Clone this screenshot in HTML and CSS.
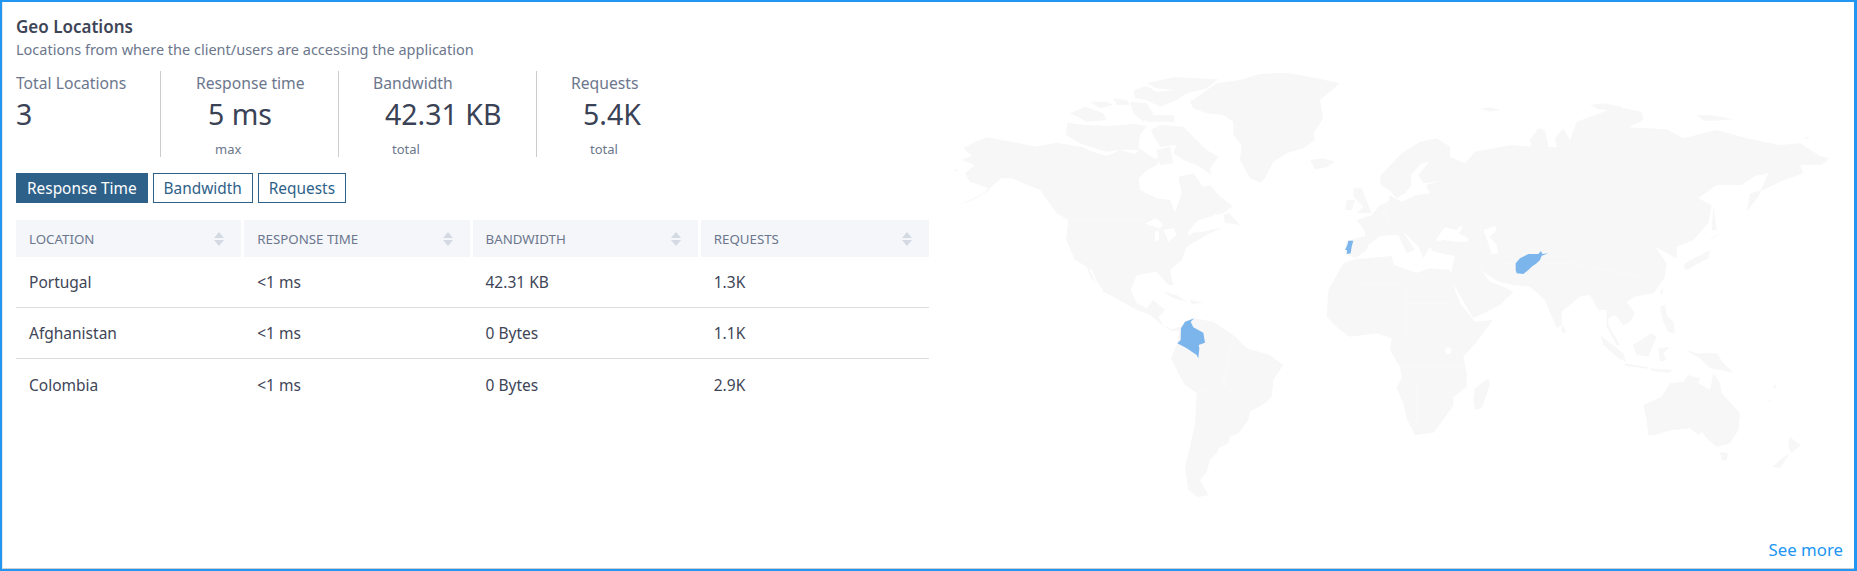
FILE: index.html
```html
<!DOCTYPE html>
<html lang="en">
<head>
    <meta charset="UTF-8">
    <title>Geo Locations</title>
    <link rel="stylesheet" href="styles.css">
</head>
<body>
    <div class="frame">
        <div class="card">
            <div class="details">
                <h2 class="title">Geo Locations</h2>
                <p class="subtitle">Locations from where the client/users are accessing the application</p>

                <div class="stats">
                    <div class="stat stat-first">
                        <div class="stat-label">Total Locations</div>
                        <div class="stat-value">3</div>
                    </div>
                    <div class="stat stat-second">
                        <div class="stat-label">Response time</div>
                        <div class="stat-value">5 ms</div>
                        <div class="stat-sub">max</div>
                    </div>
                    <div class="stat stat-third">
                        <div class="stat-label">Bandwidth</div>
                        <div class="stat-value">42.31 KB</div>
                        <div class="stat-sub">total</div>
                    </div>
                    <div class="stat stat-last">
                        <div class="stat-label">Requests</div>
                        <div class="stat-value">5.4K</div>
                        <div class="stat-sub">total</div>
                    </div>
                </div>

                <div class="tabs">
                    <button class="tab active">Response Time</button>
                    <button class="tab">Bandwidth</button>
                    <button class="tab">Requests</button>
                </div>

                <table class="geo-table">
                    <thead>
                        <tr>
                            <th><div class="th-inner">Location<span class="sort"></span></div></th>
                            <th><div class="th-inner">Response Time<span class="sort"></span></div></th>
                            <th><div class="th-inner">Bandwidth<span class="sort"></span></div></th>
                            <th><div class="th-inner">Requests<span class="sort"></span></div></th>
                        </tr>
                    </thead>
                    <tbody>
                        <tr><td>Portugal</td><td>&lt;1 ms</td><td>42.31 KB</td><td>1.3K</td></tr>
                        <tr><td>Afghanistan</td><td>&lt;1 ms</td><td>0 Bytes</td><td>1.1K</td></tr>
                        <tr><td>Colombia</td><td>&lt;1 ms</td><td>0 Bytes</td><td>2.9K</td></tr>
                    </tbody>
                </table>
            </div>

            <!-- Map, drawn at 3 units per pixel -->
            <svg class="map" viewBox="30 30 2670 1350" width="890" height="450">
                <g class="land">
                    <!-- North America -->
                    <polygon points="75,292 105,275 140,262 215,275 290,290 350,278 430,292 450,302 500,318 540,300 585,312 600,295 640,325 660,325 650,345 620,362 596,385 600,420 650,445 690,450 705,487 725,430 715,380 760,370 790,412 810,405 840,440 878,468 850,490 775,510 740,550 790,545 850,530 800,555 740,590 725,630 690,660 700,705 685,705 650,665 590,675 572,720 590,760 620,775 640,750 675,780 655,800 670,825 695,838 720,830 722,842 695,843 660,820 630,795 580,775 520,740 490,725 450,680 440,650 405,630 378,570 385,510 350,490 300,420 215,385 185,385 130,430 60,465 100,450 150,420 135,410 90,395 75,370 105,345 65,330 95,318 70,295"/>
                    <polygon points="850,495 868,490 900,525 855,518"/>
                    <polygon points="40,355 55,360 48,364"/>
                    <!-- Arctic islands and Greenland -->
                    <polygon points="620,100 700,82 835,88 800,115 740,130 700,120 650,115"/>
                    <polygon points="582,120 620,108 650,125 715,120 740,130 710,150 660,170 620,150 585,145"/>
                    <polygon points="750,155 830,100 900,90 960,72 1040,68 1130,85 1200,100 1170,125 1140,150 1150,205 1120,250 1125,270 1090,295 1040,310 1000,335 975,385 962,398 930,385 900,330 905,285 880,255 880,215 850,195 800,190 760,175"/>
                    <polygon points="390,190 435,170 490,190 500,210 440,215 420,205"/>
                    <polygon points="450,155 500,155 520,165 480,175"/>
                    <polygon points="520,145 560,150 570,165 530,165"/>
                    <polygon points="570,155 620,160 640,190 610,215 580,190"/>
                    <polygon points="610,195 700,195 705,215 620,215"/>
                    <polygon points="378,255 382,218 440,225 510,228 585,222 620,228 600,255 595,300 540,300 500,305 450,290 420,280"/>
                    <polygon points="632,240 660,225 730,230 770,270 800,300 835,320 810,355 815,375 770,345 730,330 700,310 710,285 660,290 645,265"/>
                    <polygon points="650,300 690,290 700,340 660,345"/>
                    <!-- Caribbean -->
                    <polygon points="670,725 710,735 740,755 700,745"/>
                    <polygon points="750,750 790,758 755,762"/>
                    <!-- South America -->
                    <polygon points="763,805 820,815 880,855 920,895 990,915 1030,945 1000,990 995,1040 975,1060 930,1085 925,1110 895,1150 870,1160 865,1180 835,1195 830,1210 810,1230 800,1265 780,1290 805,1335 775,1342 745,1320 735,1250 750,1190 765,1120 770,1030 735,1005 715,970 693,925 710,885 720,830"/>
                    <!-- Iceland, Britain, Ireland -->
                    <polygon points="1110,330 1150,325 1185,335 1160,352 1125,358"/>
                    <polygon points="1240,415 1265,415 1295,490 1250,490 1270,470 1240,440"/>
                    <polygon points="1215,480 1220,450 1245,450 1235,480"/>
                    <!-- Eurasia -->
                    <polygon points="1218,612 1218,575 1230,570 1275,558 1275,545 1250,510 1295,495 1320,465 1345,455 1350,435 1365,445 1385,455 1430,435 1470,430 1458,405 1500,393 1450,400 1435,375 1468,335 1445,340 1412,375 1415,405 1395,430 1370,445 1345,418 1322,405 1320,378 1385,310 1440,275 1490,265 1530,290 1530,320 1575,340 1605,305 1715,285 1775,290 1770,268 1795,235 1815,240 1825,290 1850,292 1845,265 1870,235 1890,270 1910,215 1980,190 2030,170 2105,185 2110,210 2065,232 2180,238 2230,265 2330,240 2420,265 2520,285 2580,280 2640,318 2668,325 2645,345 2580,345 2590,370 2520,395 2470,420 2430,430 2420,485 2455,440 2485,370 2445,378 2405,405 2330,405 2275,445 2315,465 2305,520 2260,570 2210,590 2210,625 2190,615 2145,590 2180,640 2175,680 2140,730 2085,740 2060,755 2085,790 2070,815 2050,825 2025,795 2005,805 2005,825 2040,885 2030,885 2000,830 2000,780 1975,780 1950,735 1920,740 1865,785 1865,825 1850,835 1815,750 1805,740 1770,710 1720,705 1675,695 1635,670 1620,655 1650,695 1690,710 1720,725 1680,765 1620,795 1600,805 1530,685 1545,618 1480,605 1460,580 1470,590 1450,625 1435,590 1385,540 1425,600 1400,610 1375,555 1355,555 1320,558 1285,585 1280,600 1245,625"/>
                    <polygon points="1660,495 1680,435 1720,420 1785,410 1720,435 1700,480 1705,518 1680,518"/>
                    <polygon points="1620,175 1650,172 1680,180 1650,185"/>
                    <polygon points="1950,165 1990,160 2050,170 2010,180 1975,178"/>
                    <polygon points="2270,195 2310,195 2380,208 2330,212 2290,212"/>
                    <polygon points="2588,265 2610,258 2602,266"/>
                    <!-- Asia islands -->
                    <polygon points="2320,465 2330,540 2315,540"/>
                    <polygon points="2305,570 2340,550 2320,565"/>
                    <polygon points="2232,655 2235,640 2310,600 2305,625 2240,660"/>
                    <polygon points="2160,730 2170,710 2168,732"/>
                    <polygon points="1868,825 1880,845 1870,850 1864,840"/>
                    <polygon points="1980,855 2050,910 2058,935 2035,925 1990,885"/>
                    <polygon points="2055,940 2125,952 2120,956 2055,947"/>
                    <polygon points="2130,955 2200,960 2185,968 2135,962"/>
                    <polygon points="2078,885 2135,850 2150,860 2135,895 2125,920 2090,915"/>
                    <polygon points="2155,895 2190,890 2170,910 2180,930 2160,935"/>
                    <polygon points="2160,770 2175,765 2180,795 2200,815 2205,850 2185,845 2170,815"/>
                    <polygon points="2235,900 2270,910 2330,910 2350,940 2380,968 2340,960 2310,955 2280,925"/>
                    <!-- Africa -->
                    <polygon points="1245,628 1355,618 1362,645 1430,668 1470,655 1530,660 1545,720 1560,760 1605,815 1658,810 1610,875 1570,920 1580,970 1580,1010 1540,1040 1540,1065 1520,1095 1480,1148 1425,1155 1400,1105 1390,1060 1370,1015 1385,985 1380,950 1350,900 1355,865 1310,850 1230,860 1200,840 1160,800 1165,720 1210,640"/>
                    <polygon points="1605,1015 1645,985 1650,1005 1625,1075 1605,1080 1600,1050"/>
                    <!-- Australia and New Zealand -->
                    <polygon points="2110,1065 2165,1040 2190,1000 2230,995 2245,975 2280,985 2275,1000 2310,1020 2320,970 2340,1000 2345,1030 2400,1090 2395,1140 2370,1180 2330,1190 2300,1165 2285,1145 2275,1155 2250,1135 2195,1140 2145,1155 2125,1155 2120,1110"/>
                    <polygon points="2338,1205 2365,1210 2360,1230 2348,1232"/>
                    <polygon points="2548,1160 2582,1185 2555,1210 2545,1190"/>
                    <polygon points="2550,1210 2520,1255 2498,1250 2525,1225"/>
                    <polygon points="2505,1000 2510,1018 2500,1012"/>
                    <polygon points="2480,1045 2500,1058 2485,1052"/>
                </g>

                <!-- Inland water -->
                <g class="water">
                    <polygon points="1490,565 1515,532 1550,540 1565,525 1565,540 1555,550 1585,565 1585,575 1545,575 1510,570 1490,575"/>
                    <polygon points="1630,540 1665,528 1670,540 1648,560 1670,585 1675,610 1655,612 1645,580"/>
                    <polygon points="615,520 650,505 670,525 660,535 625,525"/>
                    <polygon points="645,545 655,540 658,570 645,575"/>
                    <polygon points="670,540 700,535 710,555 685,575 680,560"/>
                    <ellipse cx="1525" cy="902" rx="9" ry="10"/>
                    <polyline class="water-line" points="452,658 470,700 488,722"/>
                    <polyline class="water-line" points="745,555 800,515 830,492"/>
                </g>

                <!-- Country borders -->
                <g class="borders">
                    <polyline points="385,508 615,510"/>
                    <polyline points="215,385 300,290"/>
                    <polyline points="1300,565 1320,558"/>
                    <polyline points="1330,465 1365,560"/>
                    <polyline points="1240,700 1400,700 1400,860"/>
                    <polyline points="1400,760 1530,760"/>
                    <polyline points="1380,950 1580,950"/>
                    <polyline points="1430,1000 1430,1130"/>
                    <polyline points="880,855 850,1000 770,1030"/>
                    <polyline points="850,1000 930,1085"/>
                    <polyline points="1680,640 1900,640 2100,680"/>
                    <polyline points="1620,500 1620,640 1620,655"/>
                    <polyline points="1800,660 1920,740"/>
                </g>

                <!-- Countries with traffic -->
                <g class="active-land">
                    <polygon points="763,805 735,815 723,835 722,870 712,880 740,895 770,915 775,925 778,895 776,885 795,878 790,848 760,832 752,815"/>
                    <polygon points="1225,572 1240,572 1235,590 1232,610 1220,612 1221,600 1215,600 1222,585"/>
                    <polygon points="1727,640 1740,625 1765,612 1795,612 1803,603 1807,612 1825,610 1805,617 1800,630 1790,640 1775,650 1765,660 1750,672 1730,670 1727,660"/>
                </g>
            </svg>

            <a class="see-more" href="#">See more</a>
        </div>
    </div>
</body>
</html>
```

FILE: styles.css
```css
* {
    margin: 0;
    padding: 0;
    box-sizing: border-box;
}

body {
    font-family: "Noto Sans", "Open Sans", sans-serif;
    background-color: #fff;
    color: #3e4557;
}

.frame {
    height: 571px;
    border: 2px solid #2196f3;
    border-right-width: 3px;
}

.card {
    position: relative;
    display: flex;
    height: 100%;
    padding: 0 0 0 13px;
    border-left: 1px solid #e8e8e8;
    border-bottom: 1px solid #cfcfcf;
}

.details {
    width: 913px;
    flex-shrink: 0;
}

.title {
    margin-top: 15px;
    font-size: 17px;
    line-height: 20px;
    font-weight: 600;
    color: #3e4557;
}

.subtitle {
    margin-top: 2px;
    font-size: 14.5px;
    line-height: 20px;
    color: #6c778d;
}

.stats {
    display: flex;
    margin-top: 12px;
    height: 86px;
}

.stat {
    padding-left: 34px;
    border-right: 1px solid #ccc;
}

.stat-first {
    width: 145px;
    padding-left: 0;
}

.stat-second {
    width: 178px;
    padding-left: 35px;
}

.stat-third {
    width: 198px;
}

.stat-last {
    border-right: none;
}

.stat-label {
    margin-top: 2px;
    font-size: 15.7px;
    line-height: 20px;
    color: #6c778d;
}

.stat-value {
    margin-top: 2px;
    margin-left: 12px;
    font-size: 28.5px;
    line-height: 38px;
    color: #3a4256;
}

.stat-first .stat-value {
    margin-left: 0;
}

.stat-sub {
    margin-top: 8px;
    margin-left: 19px;
    font-size: 13px;
    line-height: 16px;
    color: #6c778d;
}

.tabs {
    display: flex;
    gap: 5px;
    margin-top: 16px;
}

.tab {
    height: 30px;
    padding: 0 10px;
    font-family: inherit;
    font-size: 15.4px;
    color: #2e6189;
    background-color: #fff;
    border: 1px solid #2e6189;
    cursor: pointer;
}

.tab.active {
    color: #fff;
    background-color: #2e6189;
}

.geo-table {
    width: 100%;
    margin-top: 17px;
    table-layout: fixed;
    border-collapse: separate;
    border-spacing: 0;
}

.geo-table th {
    height: 37px;
    padding: 0 17px 0 13px;
    font-size: 13.3px;
    font-weight: 400;
    text-align: left;
    text-transform: uppercase;
    color: #6c778d;
    background-color: #f4f6fa;
    background-clip: padding-box;
    border-right: 3px solid #fff;
}

.geo-table th:last-child {
    border-right: none;
}

.th-inner {
    display: flex;
    justify-content: space-between;
    align-items: center;
}

.sort {
    display: flex;
    flex-direction: column;
    gap: 2px;
}

.sort::before,
.sort::after {
    content: "";
    border-left: 5px solid transparent;
    border-right: 5px solid transparent;
}

.sort::before {
    border-bottom: 6px solid #d5d9e2;
}

.sort::after {
    border-top: 6px solid #d5d9e2;
}

.geo-table td {
    height: 51px;
    padding: 0 13px;
    font-size: 15.5px;
    color: #3e4557;
    border-bottom: 1px solid #ddd;
}

.geo-table tr:last-child td {
    border-bottom: none;
}

.map {
    flex-shrink: 0;
    margin-top: 58px;
    margin-left: 21px;
}

.land polygon {
    fill: #f7f7f7;
}

.water polygon,
.water ellipse {
    fill: #fff;
}

.water-line {
    fill: none;
    stroke: #fff;
    stroke-width: 6;
}

.borders polyline {
    fill: none;
    stroke: #fff;
    stroke-opacity: 0.5;
    stroke-width: 2;
}

.active-land polygon {
    fill: #7cb5ec;
}

.see-more {
    position: absolute;
    right: 11px;
    bottom: 7px;
    font-size: 16.8px;
    line-height: 22px;
    color: #2196f3;
    text-decoration: none;
}
```
